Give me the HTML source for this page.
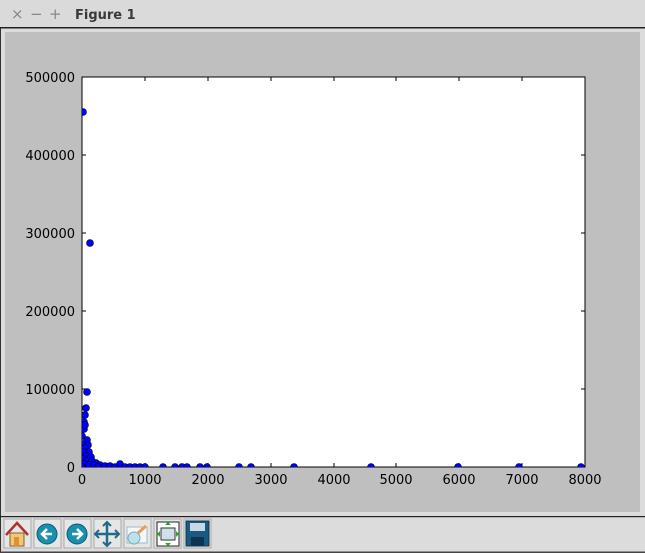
<!DOCTYPE html>
<html><head><meta charset="utf-8">
<style>
html,body{margin:0;padding:0;width:645px;height:553px;overflow:hidden;background:#dcdcdc;font-family:"Liberation Sans","DejaVu Sans",sans-serif;}
</style></head>
<body>
<svg width="645" height="553" xmlns="http://www.w3.org/2000/svg" style="position:absolute;left:0;top:0">
<rect x="0" y="0" width="645" height="27" fill="#dadada"/>
<text x="11" y="19" font-size="15" fill="#888" font-family="DejaVu Sans">×</text>
<text x="30" y="19" font-size="15" fill="#888" font-family="DejaVu Sans">−</text>
<text x="49" y="19" font-size="15" fill="#888" font-family="DejaVu Sans">+</text>
<text x="75" y="19" font-size="13" font-weight="bold" fill="#3a3a3a" font-family="DejaVu Sans">Figure 1</text>
<rect x="0" y="27" width="645" height="1.5" fill="#222"/>
<rect x="0" y="28" width="1" height="525" fill="#333"/>
<rect x="1" y="28.5" width="644" height="488" fill="#dcdcdc"/>
<rect x="5" y="32" width="635" height="480" fill="#bfbfbf"/>
<rect x="0" y="516" width="645" height="1.2" fill="#222"/>
<rect x="0" y="551.5" width="645" height="1.5" fill="#444"/>
<rect x="82" y="77" width="503" height="390" fill="#fff" stroke="#000" stroke-width="1"/>
<g font-size="13" fill="#000" font-family="DejaVu Sans" text-anchor="end">
<text x="75" y="82">500000</text>
<text x="75" y="160">400000</text>
<text x="75" y="238">300000</text>
<text x="75" y="316">200000</text>
<text x="75" y="394">100000</text>
<text x="75" y="472">0</text>
</g>
<g font-size="13" fill="#000" font-family="DejaVu Sans" text-anchor="middle">
<text x="82" y="484">0</text><text x="145" y="484">1000</text><text x="208" y="484">2000</text>
<text x="271" y="484">3000</text><text x="334" y="484">4000</text><text x="396" y="484">5000</text>
<text x="459" y="484">6000</text><text x="522" y="484">7000</text><text x="585" y="484">8000</text>
</g>
<g stroke="#000" stroke-width="1">
<path d="M82 155h4M82 233h4M82 311h4M82 389h4M581 155h4M581 233h4M581 311h4M581 389h4M145 467v-4M208 467v-4M271 467v-4M334 467v-4M396 467v-4M459 467v-4M522 467v-4M145 77v4M208 77v4M271 77v4M334 77v4M396 77v4M459 77v4M522 77v4"/>
</g>
<svg x="82" y="77" width="503" height="390" overflow="hidden">
<g fill="#0000ff" stroke="#000" stroke-width="0.6" transform="translate(-82,-77)">
<circle cx="83" cy="112" r="3.5"/><circle cx="90" cy="243" r="3.5"/>
<circle cx="87" cy="392" r="3.5"/><circle cx="86" cy="408" r="3.5"/><circle cx="85" cy="415" r="3.5"/>
<circle cx="84" cy="422" r="3.5"/><circle cx="84" cy="429" r="3.5"/><circle cx="82" cy="436" r="3.5"/>
<circle cx="87" cy="440" r="3.5"/><circle cx="88" cy="445" r="3.5"/><circle cx="82" cy="444" r="3.5"/>
<circle cx="85" cy="448" r="3.5"/><circle cx="89" cy="452" r="3.5"/><circle cx="83" cy="452" r="3.5"/>
<circle cx="86" cy="456" r="3.5"/><circle cx="91" cy="457" r="3.5"/><circle cx="83" cy="459" r="3.5"/>
<circle cx="87" cy="461" r="3.5"/><circle cx="92" cy="461" r="3.5"/><circle cx="96" cy="463" r="3.5"/>
<circle cx="84" cy="464" r="3.5"/><circle cx="89" cy="465" r="3.5"/><circle cx="94" cy="465" r="3.5"/>
<circle cx="100" cy="465" r="3.5"/><circle cx="105" cy="466" r="3.5"/><circle cx="110" cy="466" r="3.5"/>
<circle cx="82" cy="467" r="3.5"/><circle cx="98" cy="467" r="3.5"/><circle cx="115" cy="467" r="3.5"/>
<circle cx="120" cy="464" r="3.5"/><circle cx="125" cy="467" r="3.5"/><circle cx="130" cy="467" r="3.5"/>
<circle cx="135" cy="467" r="3.5"/><circle cx="140" cy="467" r="3.5"/><circle cx="145" cy="467" r="3.5"/>
<circle cx="85" cy="425" r="3.5"/>
<circle cx="163" cy="467" r="3.5"/><circle cx="175" cy="467" r="3.5"/><circle cx="182" cy="467" r="3.5"/>
<circle cx="187" cy="467" r="3.5"/><circle cx="200" cy="467" r="3.5"/><circle cx="207" cy="467" r="3.5"/>
<circle cx="239" cy="467" r="3.5"/><circle cx="251" cy="467" r="3.5"/><circle cx="294" cy="467" r="3.5"/>
<circle cx="371" cy="467" r="3.5"/><circle cx="458" cy="467" r="3.5"/><circle cx="519" cy="467" r="3.5"/>
<circle cx="581" cy="467" r="3.5"/>
</g>
</svg>
<g>
<rect x="4" y="519" width="27" height="29" fill="#e6e6e6" stroke="#aaa"/>
<rect x="34" y="519" width="27" height="29" fill="#e6e6e6" stroke="#aaa"/>
<rect x="64" y="519" width="27" height="29" fill="#e6e6e6" stroke="#aaa"/>
<rect x="94" y="519" width="27" height="29" fill="#e6e6e6" stroke="#aaa"/>
<rect x="124" y="519" width="27" height="29" fill="#e6e6e6" stroke="#aaa"/>
<rect x="154" y="519" width="27" height="29" fill="#e6e6e6" stroke="#aaa"/>
<rect x="184" y="519" width="27" height="29" fill="#e6e6e6" stroke="#aaa"/>
</g>
<path d="M6 535 L17 523 L28 535" fill="none" stroke="#b03030" stroke-width="2.5"/>
<rect x="10" y="533" width="14" height="13" fill="#f0c878" stroke="#806030"/>
<rect x="14" y="537" width="5" height="9" fill="#e09030"/>
<circle cx="47" cy="534" r="10" fill="#1a8fb0" stroke="#0b5a75"/>
<path d="M52 534h-8M47 529l-5 5 5 5" fill="none" stroke="#fff" stroke-width="2.5"/>
<circle cx="77" cy="534" r="10" fill="#1a8fb0" stroke="#0b5a75"/>
<path d="M72 534h8M77 529l5 5-5 5" fill="none" stroke="#fff" stroke-width="2.5"/>
<path d="M107 522v24M95 534h24" stroke="#1e6a8a" stroke-width="2.5"/>
<path d="M103 526l4-4 4 4M103 542l4 4 4-4M99 530l-4 4 4 4M115 530l4 4-4 4" fill="none" stroke="#1e6a8a" stroke-width="2"/>
<rect x="127" y="527" width="20" height="16" fill="#f4f8fb" stroke="#a0b8c8"/>
<circle cx="134" cy="538" r="6" fill="#bde0ef" stroke="#7ab"/>
<path d="M138 533l8-7" stroke="#e8a050" stroke-width="3"/>
<rect x="157" y="522" width="22" height="24" fill="#fff" stroke="#222"/>
<rect x="161" y="528" width="14" height="12" fill="#d0e0e8" stroke="#333"/>
<path d="M168 522l-3 3h6zM168 546l-3-3h6zM157 534l3-3v6zM179 534l-3-3v6z" fill="#2a2"/>
<rect x="186" y="521" width="23" height="25" fill="#1a5a80" stroke="#0d3550"/>
<rect x="190" y="523" width="15" height="8" fill="#c8d8e4"/>
<rect x="191" y="537" width="13" height="9" fill="#0d3550"/>
</svg>
</body></html>
